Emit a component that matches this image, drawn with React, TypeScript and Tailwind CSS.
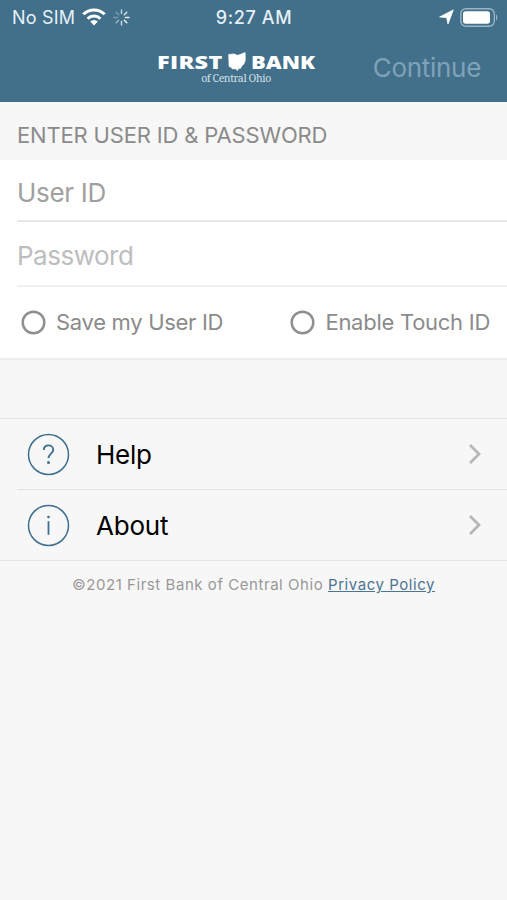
import React, { useState } from 'react';

interface OptionToggleProps {
  label: string;
  checked: boolean;
  onChange: () => void;
  labelClass: string;
}

const OptionToggle: React.FC<OptionToggleProps> = ({ label, checked, onChange, labelClass }) => (
  <button type="button" role="checkbox" aria-checked={checked} onClick={onChange} className="flex items-center">
    <svg width="25" height="25" viewBox="0 0 25 25" fill={checked ? '#8f8f8f' : 'none'} stroke="#8f8f8f" strokeWidth="2.5">
      <circle cx="12.5" cy="12.5" r="10.8" />
    </svg>
    <span className={`ml-2.5 whitespace-nowrap text-[#8b8b8b] ${labelClass}`}>{label}</span>
  </button>
);

interface MenuRowProps {
  label: string;
  labelClass: string;
  children: React.ReactNode;
}

const MenuRow: React.FC<MenuRowProps> = ({ label, labelClass, children }) => (
  <button type="button" className="w-full h-[70px] pl-[27px] pr-[26px] flex items-center text-left">
    <svg width="43" height="43" viewBox="0 0 43 43" fill="none" stroke="#3f6f90" strokeWidth="1.5">
      <circle cx="21.5" cy="21.5" r="20" />
      {children}
    </svg>
    <span className={`ml-[26px] flex-1 text-black ${labelClass}`}>{label}</span>
    <svg width="13" height="20" viewBox="0 0 13 20" fill="none" stroke="#b6b6b6" strokeWidth="2.7">
      <path d="M2 1l9 9-9 9" />
    </svg>
  </button>
);

const StatusBar = () => (
  <div className="h-[34px] pl-3 pr-[9px] grid grid-cols-[1fr_auto_1fr] items-center text-[#e6f0f7]">
    <div className="flex items-center">
      <span className="pt-px text-[18px] leading-none tracking-[0.2px]">No SIM</span>
      <svg className="ml-[7px]" width="24" height="18" viewBox="0 0 24 18" fill="none" stroke="#fff" strokeWidth="3">
        <path d="M1.3 6.3a15.2 15.2 0 0 1 21.4 0" />
        <path d="M5.6 10.7a9.1 9.1 0 0 1 12.8 0" />
        <path d="M12 17.4l-3.8-3.9a5.5 5.5 0 0 1 7.6 0z" fill="#fff" stroke="none" />
      </svg>
      <svg className="ml-[7px]" width="17" height="17" viewBox="-8.5 -8.5 17 17" stroke="#e6f0f7" strokeWidth="1.5" strokeLinecap="round">
        <path d="M0-4v-3.5" opacity=".75" />
        <path d="M2.8-2.8l2.5-2.5" opacity=".9" />
        <path d="M4 0h3.5" />
        <path d="M2.8 2.8l2.5 2.5" />
        <path d="M0 4v3.5" opacity=".8" />
        <path d="M-2.8 2.8l-2.5 2.5" opacity=".55" />
        <path d="M-4 0h-3.5" opacity=".35" />
        <path d="M-2.8-2.8l-2.5-2.5" opacity=".35" />
      </svg>
    </div>
    <span className="pt-px pr-[2px] text-[18px] leading-none font-medium tracking-[0.6px]">9:27 AM</span>
    <div className="flex items-center justify-end">
      <svg width="15" height="16" viewBox="0 0 15 16" fill="#fff" stroke="#fff" strokeWidth=".8" strokeLinejoin="round">
        <path d="M14.3.9L9 15 7.6 8.6.6 8z" />
      </svg>
      <svg className="ml-[6px]" width="38" height="19" viewBox="0 0 38 19" fill="none">
        <rect x=".8" y=".8" width="33.5" height="17.4" rx="5" stroke="#9ab5c6" strokeWidth="1.4" />
        <rect x="3" y="3.2" width="27" height="12.6" rx="2.8" fill="#fff" />
        <path d="M36 6.5c1.8.8 1.8 5.2 0 6z" fill="#9ab5c6" />
      </svg>
    </div>
  </div>
);

const Logo = () => (
  <div className="w-[158px] flex flex-col items-center text-white">
    <div className="w-full h-[18px] flex items-center justify-between font-['Open_Sans'] font-extrabold text-[18px] leading-none">
      <span className="w-[65px] whitespace-nowrap origin-left scale-x-[1.3] tracking-[0.25px]">FIRST</span>
      <svg width="18" height="19" viewBox="0 0 17 18" fill="#fff" stroke="#fff" strokeWidth=".6">
        <path d="M.6 2.3L6 1.8l2.5 1.3L11 2.6 16.2.5l.2 7.2-1.4 3.7-2.1 2-1.2 2.2-1.7-.1-.9 2-2.1-1.6-2.7.1-1.8-1.7-1.5-.4z" />
      </svg>
      <span className="w-[64px] whitespace-nowrap origin-left scale-x-[1.22]">BANK</span>
    </div>
    <span className="mt-px font-['Noto_Serif','Liberation_Serif',serif] text-[10.5px] leading-[12px] tracking-[-0.4px] text-[#d3e0ea] whitespace-nowrap">
      of Central Ohio
    </span>
  </div>
);

const App: React.FC = () => {
  const [userId, setUserId] = useState('');
  const [password, setPassword] = useState('');
  const [saveId, setSaveId] = useState(false);
  const [touchId, setTouchId] = useState(false);

  return (
    <div className="min-h-screen bg-[#f7f7f7] font-['Inter','Liberation_Sans',sans-serif]">
      <header className="h-[102px] bg-[#426f89]">
        <StatusBar />
        <div className="h-[68px] pl-[157px] pr-[26px] flex items-center justify-between">
          <Logo />
          <button type="button" className="text-[26px] leading-none tracking-[-0.3px] text-[#7fa2ba]">Continue</button>
        </div>
      </header>

      <form onSubmit={(e) => e.preventDefault()}>
        <h2 className="h-[58px] pl-[17px] pt-[7px] flex items-center text-[22px] leading-none tracking-[-0.17px] text-[#8b8b8b]">
          ENTER USER ID &amp; PASSWORD
        </h2>
        <div className="bg-white border-b-2 border-[#ececec]">
          <div className="ml-[17px] h-[62px] border-b-2 border-[#e7e7e7]">
            <input
              type="text"
              aria-label="User ID"
              value={userId}
              onChange={(e) => setUserId(e.target.value)}
              placeholder="User ID"
              className="w-full h-full pt-[5px] outline-none text-[26px] tracking-[-0.3px] placeholder:text-[#a0a0a0]"
            />
          </div>
          <div className="ml-[17px] h-[65px] border-b-2 border-[#f0f0f0]">
            <input
              type="password"
              aria-label="Password"
              value={password}
              onChange={(e) => setPassword(e.target.value)}
              placeholder="Password"
              className="w-full h-full pt-[4px] outline-none text-[26px] tracking-[-0.5px] placeholder:text-[#bdbdbd]"
            />
          </div>
          <div className="h-[71px] pl-[21px] pr-[17px] flex items-center justify-between">
            <OptionToggle label="Save my User ID" labelClass="text-[22px] tracking-[-0.3px]" checked={saveId} onChange={() => setSaveId(!saveId)} />
            <OptionToggle label="Enable Touch ID" labelClass="text-[22px] tracking-[-0.27px]" checked={touchId} onChange={() => setTouchId(!touchId)} />
          </div>
        </div>
      </form>

      <nav className="mt-[58px] border-y border-[#e4e4e4]">
        <MenuRow label="Help" labelClass="text-[26px] tracking-[-0.3px]">
          <path d="M16.9 17c0-2.9 1.9-4.6 4.6-4.6s4.7 1.8 4.7 4.4c0 4-4.7 4.1-4.7 8.2" strokeWidth="1.9" />
          <circle cx="21.5" cy="29.6" r="1.5" fill="#3f6f90" stroke="none" />
        </MenuRow>
        <div className="ml-[17px] h-px bg-[#e2e2e2]" />
        <MenuRow label="About" labelClass="text-[26px] tracking-[-0.2px]">
          <path d="M21.5 17.2v13.6" strokeWidth="1.8" />
          <circle cx="21.5" cy="13" r="1.3" fill="#3f6f90" stroke="none" />
        </MenuRow>
      </nav>

      <footer className="pt-[14px] text-center text-[15px] leading-5 tracking-[0.55px] whitespace-nowrap text-[#999]">
        ©2021 First Bank of Central Ohio{' '}
        <a href="#privacy" className="text-[#4c7592] underline">Privacy Policy</a>
      </footer>
    </div>
  );
};

export default App;
